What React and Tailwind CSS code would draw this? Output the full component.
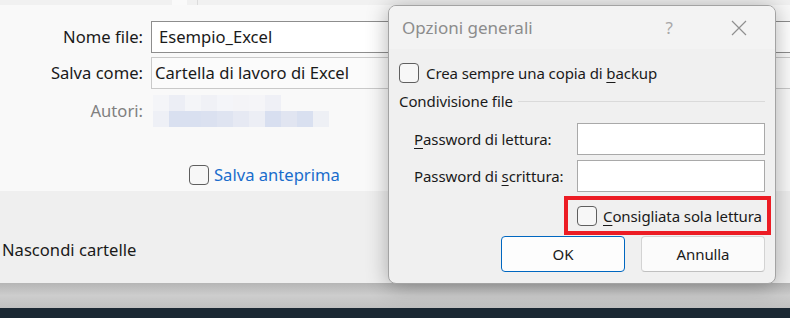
import React from "react";

const Check = ({ className = "" }) => (
  <span className={"inline-block w-[20px] h-[20px] rounded-[4px] border border-[#5f5f5f] bg-[#f7f7f7] shrink-0 " + className} />
);

const blocksTop = ["#f4f5f8", "#eceef5", "#f4f5f8", "#f0f1f6", "#f4f5f9", "#f4f4f7", "#f5f5f8", "#eff0f6", "#f9f9f9", "#f9f9f9", "#f9f9f9"];
const blocksBot = ["#eef0f6", "#d9e0f0", "#d9e0f0", "#dbe1f0", "#dfe4f1", "#e6e9f3", "#eceef5", "#d8dff0", "#e1e5f1", "#d9e0f0", "#eef0f5"];

export default function App() {
  return (
    <div className="relative w-[790px] h-[318px] overflow-hidden bg-[#1b2833] font-['Segoe_UI','Noto_Sans',sans-serif] text-[16.6px] leading-[24px] text-[#1a1a1a]">
      <div className="flex flex-col h-full">
        {/* top strip */}
        <div className="h-[5px] shrink-0 bg-[#f1f1f1] flex">
          <div className="w-[172px]" />
          <div className="w-[15px] bg-[#fafafa]" />
          <div className="w-[10px]" />
          <div className="w-[1px] bg-[#dcdcdc]" />
        </div>
        {/* main content */}
        <div className="h-[186px] shrink-0 bg-[#f9f9f9] flex flex-col pt-[16px]">
          <div className="flex items-center h-[32px]">
            <div className="w-[151px] shrink-0 pr-[8px] text-right whitespace-nowrap">Nome file:</div>
            <div className="w-[700px] shrink-0 h-[32px] border border-[#8d8d8d] bg-white pl-[7px] flex items-center">Esempio_Excel</div>
          </div>
          <div className="flex items-center h-[32px] mt-[4px]">
            <div className="w-[151px] shrink-0 pr-[8px] text-right whitespace-nowrap">Salva come:</div>
            <div className="w-[700px] shrink-0 h-[32px] border border-[#c9c9c9] bg-[#fbfbfb] pl-[3px] flex items-center">Cartella di lavoro di Excel</div>
          </div>
          <div className="flex items-center mt-[6px]">
            <div className="w-[153px] shrink-0 pr-[10px] text-right text-[#808080]">Autori:</div>
            <div className="flex flex-col">
              <div className="flex">
                {blocksTop.map((c, i) => (
                  <span key={i} className="w-[16px] h-[16px]" style={{ background: c }} />
                ))}
              </div>
              <div className="flex">
                {blocksBot.map((c, i) => (
                  <span key={i} className="w-[16px] h-[16px]" style={{ background: c }} />
                ))}
              </div>
            </div>
          </div>
          <div className="flex items-center mt-[36px] pl-[189px]">
            <Check />
            <span className="ml-[5px] text-[#1a6dcc]">Salva anteprima</span>
          </div>
        </div>
        {/* footer */}
        <div className="h-[92px] shrink-0 bg-[#efefef] pt-[47px] pl-[2px]">Nascondi cartelle</div>
        <div className="h-[25px] shrink-0 bg-gradient-to-b from-[#b5b5b5] via-[#cdcdcd] to-[#c0c0c0]" />
        <div className="flex-1 bg-[#1b2833]" />
      </div>

      {/* dialog */}
      <div className="absolute left-[388px] top-[5px] w-[388px] h-[279px] rounded-[8px] border border-[#a3a3a3] bg-[#f0f0f0] shadow-[0_2px_22px_rgba(0,0,0,0.3)] overflow-hidden flex flex-col text-[15px] tracking-[-0.1px]">
        <div className="h-[43px] shrink-0 bg-[#f3f3f3] flex items-center pl-[13px] pr-[28px] text-[17px] tracking-normal">
          <span className="text-[#8c8c8c] flex-1">Opzioni generali</span>
          <span className="text-[#a8a8a8] mr-[58px]">?</span>
          <svg width="16" height="16" viewBox="0 0 16 16" className="block">
            <path d="M1 1 L15 15 M15 1 L1 15" stroke="#8f8f8f" strokeWidth="1.2" fill="none" />
          </svg>
        </div>
        <div className="flex flex-col pl-[10px] pr-[10px]">
          <div className="flex items-center mt-[14px] h-[20px]">
            <Check />
            <span className="ml-[7px] whitespace-nowrap">Crea sempre una copia di <span className="underline underline-offset-[3px]">b</span>ackup</span>
          </div>
          <div className="flex items-center mt-[6px] h-[24px]">
            <span className="whitespace-nowrap">Condivisione file</span>
            <div className="flex-1 h-[1px] bg-[#dadada] ml-[5px]" />
          </div>
          <div className="flex items-center mt-[10px] h-[32px]">
            <span className="w-[178px] shrink-0 pl-[15px] whitespace-nowrap"><span className="underline underline-offset-[3px]">P</span>assword di lettura:</span>
            <div className="w-[188px] shrink-0 h-[32px] bg-white border border-[#a9a9a9]" />
          </div>
          <div className="flex items-center mt-[5px] h-[32px]">
            <span className="w-[178px] shrink-0 pl-[15px] whitespace-nowrap">Password di <span className="underline underline-offset-[3px]">s</span>crittura:</span>
            <div className="w-[188px] shrink-0 h-[32px] bg-white border border-[#a9a9a9]" />
          </div>
          <div className="flex justify-end mt-[4px] -mr-[6px]">
            <div className="w-[207px] h-[39px] border-[4px] border-[#ec1c24] flex items-center pl-[9px]">
              <Check />
              <span className="ml-[6px] whitespace-nowrap"><span className="underline underline-offset-[3px]">C</span>onsigliata sola lettura</span>
            </div>
          </div>
          <div className="flex justify-end mt-[1px] gap-[16px]">
            <button className="w-[124px] h-[36px] rounded-[4px] border border-[#0067c0] bg-[#fdfdfd] flex items-center justify-center">OK</button>
            <button className="w-[124px] h-[36px] rounded-[4px] border border-[#d3d3d3] border-b-[#c0c0c0] bg-[#fbfbfb] flex items-center justify-center">Annulla</button>
          </div>
        </div>
      </div>
    </div>
  );
}
